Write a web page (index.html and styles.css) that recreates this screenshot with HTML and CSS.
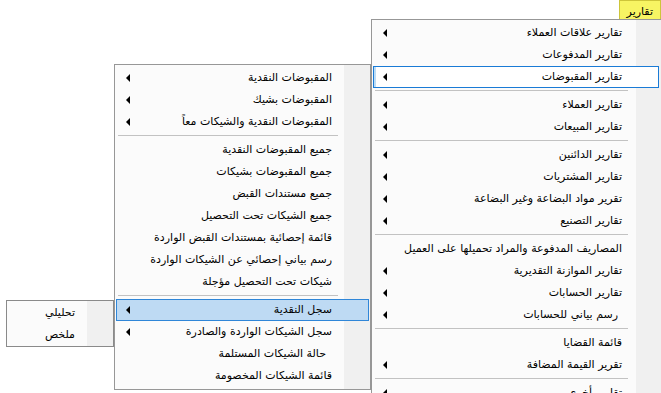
FILE: index.html
```html
<!DOCTYPE html>
<html lang="ar">

<head>
    <meta charset="UTF-8">
    <meta name="viewport" content="width=device-width, initial-scale=1.0">
    <title>تقارير</title>
    <link rel="stylesheet" href="styles.css">
</head>

<body>
    <div class="screen">
        <!-- Menu bar -->
        <div class="menubar" dir="rtl">
            <div class="menubar-item active">تقارير</div>
        </div>

        <!-- Main reports menu -->
        <div class="menu main-menu" dir="rtl">
            <div class="item"><span class="label">تقارير علاقات العملاء</span><span class="arrow"></span></div>
            <div class="item"><span class="label">تقارير المدفوعات</span><span class="arrow"></span></div>
            <div class="item focused"><span class="label">تقارير المقبوضات</span><span class="arrow"></span></div>
            <div class="sep"></div>
            <div class="item"><span class="label">تقارير العملاء</span><span class="arrow"></span></div>
            <div class="item"><span class="label">تقارير المبيعات</span><span class="arrow"></span></div>
            <div class="sep"></div>
            <div class="item"><span class="label">تقارير الدائنين</span><span class="arrow"></span></div>
            <div class="item"><span class="label">تقارير المشتريات</span><span class="arrow"></span></div>
            <div class="item"><span class="label">تقرير مواد البضاعة وغير البضاعة</span><span class="arrow"></span></div>
            <div class="item"><span class="label">تقارير التصنيع</span><span class="arrow"></span></div>
            <div class="sep"></div>
            <div class="item"><span class="label">المصاريف المدفوعة والمراد تحميلها على العميل</span></div>
            <div class="item"><span class="label">تقارير الموازنة التقديرية</span><span class="arrow"></span></div>
            <div class="item"><span class="label">تقارير الحسابات</span><span class="arrow"></span></div>
            <div class="item"><span class="label indent">رسم بياني للحسابات</span><span class="arrow"></span></div>
            <div class="sep"></div>
            <div class="item"><span class="label">قائمة القضايا</span></div>
            <div class="item"><span class="label">تقرير القيمة المضافة</span><span class="arrow"></span></div>
            <div class="sep"></div>
            <div class="item"><span class="label">تقارير أخرى</span><span class="arrow"></span></div>
        </div>

        <!-- Receipts submenu -->
        <div class="menu sub-menu" dir="rtl">
            <div class="item"><span class="label">المقبوضات النقدية</span><span class="arrow"></span></div>
            <div class="item"><span class="label">المقبوضات بشيك</span><span class="arrow"></span></div>
            <div class="item"><span class="label">المقبوضات النقدية والشيكات معاً</span><span class="arrow"></span></div>
            <div class="sep"></div>
            <div class="item"><span class="label">جميع المقبوضات النقدية</span></div>
            <div class="item"><span class="label">جميع المقبوضات بشيكات</span></div>
            <div class="item"><span class="label">جميع مستندات القبض</span></div>
            <div class="item"><span class="label">جميع الشيكات تحت التحصيل</span></div>
            <div class="item"><span class="label">قائمة إحصائية بمستندات القبض الواردة</span></div>
            <div class="item"><span class="label">رسم بياني إحصائي عن الشيكات الواردة</span></div>
            <div class="item"><span class="label">شيكات تحت التحصيل مؤجلة</span></div>
            <div class="sep"></div>
            <div class="item selected"><span class="label">سجل النقدية</span><span class="arrow"></span></div>
            <div class="item"><span class="label">سجل الشيكات الواردة والصادرة</span><span class="arrow"></span></div>
            <div class="item"><span class="label indent-wide">حالة الشيكات المستلمة</span></div>
            <div class="item"><span class="label">قائمة الشيكات المخصومة</span></div>
        </div>

        <!-- Cash register submenu -->
        <div class="menu leaf-menu" dir="rtl">
            <div class="item"><span class="label">تحليلي</span></div>
            <div class="item"><span class="label">ملخص</span></div>
        </div>
    </div>
</body>

</html>
```

FILE: styles.css
```css
/* Global Styles */
* {
    margin: 0;
    padding: 0;
    box-sizing: border-box;
}

body {
    background-color: #ffffff;
    color: #000;
    font-family: 'DejaVu Sans', Tahoma, sans-serif;
    font-size: 11px;
    overflow: hidden;
}

.screen {
    position: relative;
    width: 661px;
    height: 393px;
    overflow: hidden;
}

/* Menu bar */
.menubar {
    display: flex;
    height: 23px;
}

.menubar-item {
    height: 23px;
    padding: 0 7px;
    line-height: 21px;
    border: 1px solid transparent;
}

.menubar-item.active {
    width: 42px;
    background-color: #f7f463;
    border-color: #cdc53a;
}

/* Popup menus */
.menu {
    position: absolute;
    border: 1px solid #979797;
    padding: 2px 1px;
    background: linear-gradient(to left, #f0f0f0 26px, #fbfbfb 26px);
}

.main-menu {
    left: 371px;
    top: 19px;
    width: 292px;
    height: 400px;
    padding-right: 3px;
}

.sub-menu {
    left: 114px;
    top: 64px;
    width: 257px;
    height: 326px;
}

.leaf-menu {
    left: 6px;
    top: 300px;
    width: 108px;
    height: 47px;
    padding: 1px 1px;
    border-color: #8a8a8a;
}

.item {
    display: flex;
    align-items: center;
    height: 22px;
    padding: 0 36px 0 9px;
    border: 1px solid transparent;
    white-space: nowrap;
}

.label {
    line-height: 20px;
}

.indent {
    padding-right: 4px;
}

.indent-wide {
    padding-right: 6px;
}

.arrow {
    margin-right: auto;
    width: 0;
    height: 0;
    border-top: 4px solid transparent;
    border-bottom: 4px solid transparent;
    border-right: 4px solid #000;
}

.item.focused {
    background-color: #fff;
    border-color: #1a7bd6;
    box-shadow: inset 2px 0 0 #bcdcf5;
}

.item.selected {
    background-color: #bedaf3;
    border-color: #2f86d8;
}

.sep {
    height: 6px;
    margin: 0 31px 0 2px;
    border-top: 1px solid #c2c2c2;
    transform: translateY(2px);
}
```
